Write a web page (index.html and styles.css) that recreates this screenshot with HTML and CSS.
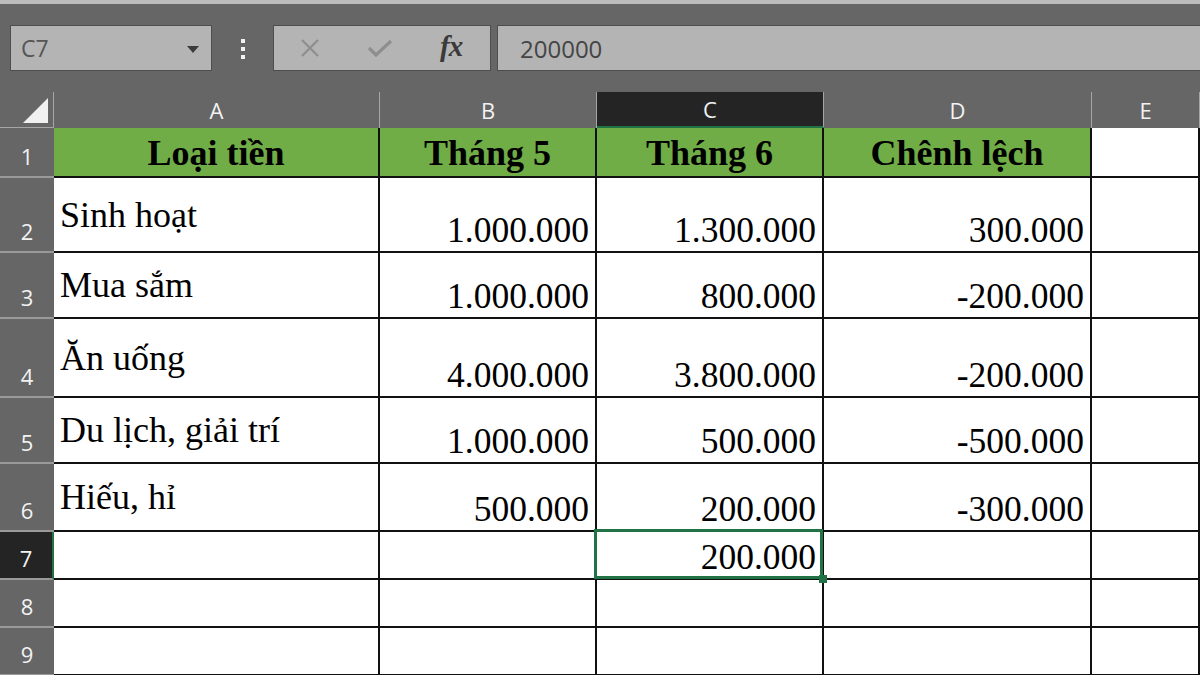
FILE: index.html
```html
<!DOCTYPE html>
<html lang="vi">
<head>
    <meta charset="UTF-8">
    <title>Chênh lệch chi tiêu</title>
    <link rel="stylesheet" href="styles.css">
</head>
<body>

    <div class="formula-bar">
        <div class="name-box">
            <span>C7</span>
            <span class="caret"></span>
        </div>
        <div class="grip">
            <span></span><span></span><span></span>
        </div>
        <div class="fx-buttons">
            <svg class="icon" width="22" height="22" viewBox="0 0 22 22">
                <path d="M3 3 L19 19 M19 3 L3 19" stroke="#8e8e8e" stroke-width="2.2" fill="none"/>
            </svg>
            <svg class="icon" width="28" height="22" viewBox="0 0 28 22">
                <path d="M3 11 L10 18 L25 4" stroke="#8e8e8e" stroke-width="3.2" fill="none"/>
            </svg>
            <span class="fx">fx</span>
        </div>
        <div class="formula-input">200000</div>
    </div>

    <div class="sheet">
        <!-- header row -->
        <div class="corner"><span class="tri"></span></div>
        <div class="col-head">A</div>
        <div class="col-head">B</div>
        <div class="col-head active">C</div>
        <div class="col-head">D</div>
        <div class="col-head">E</div>

        <div class="row-head">1</div>
        <div class="cell title">Loại tiền</div>
        <div class="cell title">Tháng 5</div>
        <div class="cell title">Tháng 6</div>
        <div class="cell title">Chênh lệch</div>
        <div class="cell"></div>

        <div class="row-head">2</div>
        <div class="cell label">Sinh hoạt</div>
        <div class="cell num">1.000.000</div>
        <div class="cell num">1.300.000</div>
        <div class="cell num">300.000</div>
        <div class="cell"></div>

        <div class="row-head">3</div>
        <div class="cell label">Mua sắm</div>
        <div class="cell num">1.000.000</div>
        <div class="cell num">800.000</div>
        <div class="cell num">-200.000</div>
        <div class="cell"></div>

        <div class="row-head">4</div>
        <div class="cell label">Ăn uống</div>
        <div class="cell num">4.000.000</div>
        <div class="cell num">3.800.000</div>
        <div class="cell num">-200.000</div>
        <div class="cell"></div>

        <div class="row-head">5</div>
        <div class="cell label">Du lịch, giải trí</div>
        <div class="cell num">1.000.000</div>
        <div class="cell num">500.000</div>
        <div class="cell num">-500.000</div>
        <div class="cell"></div>

        <div class="row-head">6</div>
        <div class="cell label">Hiếu, hỉ</div>
        <div class="cell num">500.000</div>
        <div class="cell num">200.000</div>
        <div class="cell num">-300.000</div>
        <div class="cell"></div>

        <div class="row-head active">7</div>
        <div class="cell"></div>
        <div class="cell"></div>
        <div class="cell num selected">200.000</div>
        <div class="cell"></div>
        <div class="cell"></div>

        <div class="row-head">8</div>
        <div class="cell"></div>
        <div class="cell"></div>
        <div class="cell"></div>
        <div class="cell"></div>
        <div class="cell"></div>

        <div class="row-head">9</div>
        <div class="cell"></div>
        <div class="cell"></div>
        <div class="cell"></div>
        <div class="cell"></div>
        <div class="cell"></div>
    </div>

</body>
</html>
```

FILE: styles.css
```css
body {
    margin: 0;
    padding: 0;
    width: 1200px;
    height: 675px;
    overflow: hidden;
    background-color: #666666;
    font-family: 'Open Sans', 'Noto Sans', sans-serif;
}

/* ---- formula bar ---- */

.formula-bar {
    height: 91px;
    box-sizing: border-box;
    border-top: 4px solid #bcbcbc;
    padding: 21px 0 0 10px;
    display: flex;
    align-items: flex-start;
}

.name-box,
.fx-buttons,
.formula-input {
    height: 46px;
    box-sizing: border-box;
    background-color: #b4b4b4;
    border: 1px solid #4e4e4e;
    display: flex;
    align-items: center;
}

.name-box {
    width: 202px;
    padding: 0 12px 0 10px;
    justify-content: space-between;
    font-size: 23px;
    color: #555555;
}

.caret {
    width: 0;
    height: 0;
    border-left: 6px solid transparent;
    border-right: 6px solid transparent;
    border-top: 7px solid #3c3c3c;
    margin-top: 2px;
}

.grip {
    width: 61px;
    display: flex;
    flex-direction: column;
    align-items: center;
    gap: 4px;
    padding-top: 14px;
}

.grip span {
    width: 4px;
    height: 4px;
    background-color: #f2f2f2;
}

.fx-buttons {
    width: 218px;
    padding: 0 0 0 25px;
}

.fx-buttons .icon:first-child {
    margin-right: 45px;
}

.fx-buttons .icon:nth-child(2) {
    margin-right: 46px;
}

.fx {
    font-family: 'Liberation Serif', serif;
    font-style: italic;
    font-weight: bold;
    font-size: 29px;
    color: #3a3a3a;
    margin-top: -3px;
    letter-spacing: -1px;
}

.formula-input {
    flex: 1;
    margin-left: 6px;
    margin-right: -2px;
    padding-left: 22px;
    font-size: 24px;
    color: #454545;
}

/* ---- sheet grid ---- */

.sheet {
    display: grid;
    grid-template-columns: 54px 326px 217px 227px 268px 1fr;
    grid-template-rows: 37px 50px 75px 66px 79px 66px 68px 48px 48px 48px;
}

.corner {
    position: relative;
    border-right: 1px solid #a6a6a6;
    border-bottom: 1px solid #a6a6a6;
    margin-top: 1px;
}

.tri {
    position: absolute;
    right: 5px;
    bottom: 4px;
    width: 0;
    height: 0;
    border-left: 25px solid transparent;
    border-bottom: 25px solid #f0f0f0;
}

.col-head {
    margin-top: 1px;
    border-right: 1px solid #a6a6a6;
    display: flex;
    align-items: center;
    justify-content: center;
    color: #f2f2f2;
    font-size: 22px;
}

.col-head.active {
    background-color: #242424;
    border-bottom: 2px solid #217346;
}

.row-head {
    border-bottom: 2px solid #9a9a9a;
    display: flex;
    align-items: flex-end;
    justify-content: center;
    padding-bottom: 5px;
    color: #f2f2f2;
    font-size: 22px;
    box-sizing: border-box;
}

.row-head.active {
    background-color: #242424;
    border-right: 2px solid #217346;
}

.cell {
    background-color: white;
    border-right: 2px solid #111;
    border-bottom: 2px solid #111;
    box-sizing: border-box;
    font-family: 'Liberation Serif', 'Times New Roman', serif;
    font-size: 36px;
    color: #000;
    display: flex;
    white-space: nowrap;
}

.title {
    background-color: #70ad47;
    font-weight: bold;
    justify-content: center;
    align-items: center;
    padding-top: 2px;
}

.label {
    align-items: center;
    padding-left: 6px;
}

.num {
    justify-content: flex-end;
    align-items: flex-end;
    padding-right: 6px;
    font-size: 35.5px;
}

.selected {
    position: relative;
}

.selected::after {
    content: "";
    position: absolute;
    left: -3px;
    top: -3px;
    right: -1px;
    bottom: -1px;
    border: 3px solid #217346;
}

.selected::before {
    content: "";
    position: absolute;
    right: -5px;
    bottom: -5px;
    width: 8px;
    height: 8px;
    background-color: #217346;
    z-index: 1;
}
```
